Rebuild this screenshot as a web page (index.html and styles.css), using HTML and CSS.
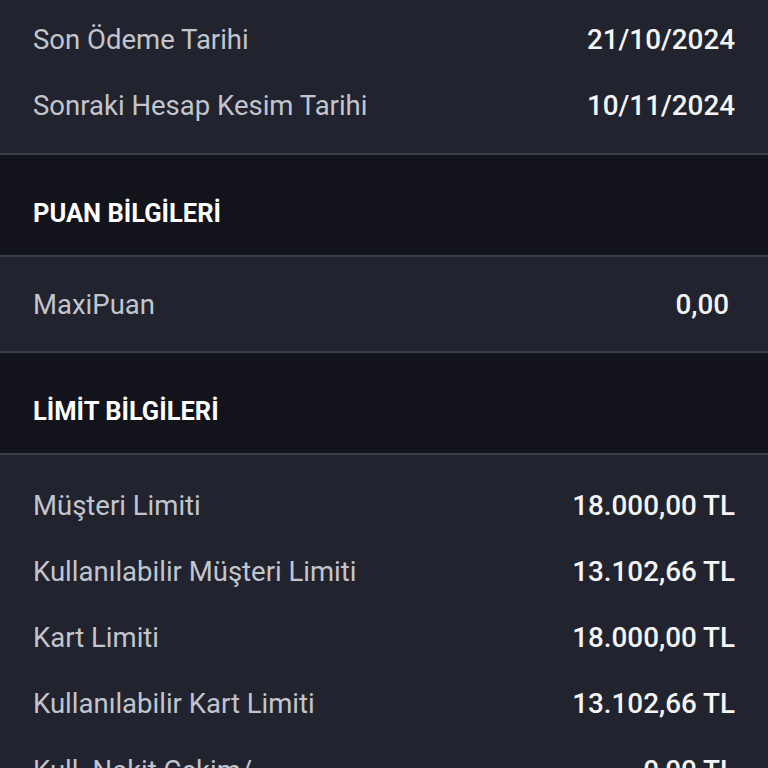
FILE: index.html
```html
<!DOCTYPE html>
<html lang="tr">
<head>
  <meta charset="UTF-8">
  <title>Kart Bilgileri</title>
  <link rel="stylesheet" href="styles.css">
</head>
<body>
  <div class="screen">
    <div class="section first">
      <div class="row">
        <span class="label">Son Ödeme Tarihi</span>
        <span class="value">21/10/2024</span>
      </div>
      <div class="row">
        <span class="label">Sonraki Hesap Kesim Tarihi</span>
        <span class="value">10/11/2024</span>
      </div>
    </div>

    <div class="section-title">PUAN BİLGİLERİ</div>

    <div class="section single">
      <div class="row">
        <span class="label">MaxiPuan</span>
        <span class="value points">0,00</span>
      </div>
    </div>

    <div class="section-title">LİMİT BİLGİLERİ</div>

    <div class="section">
      <div class="row">
        <span class="label">Müşteri Limiti</span>
        <span class="value">18.000,00 TL</span>
      </div>
      <div class="row">
        <span class="label">Kullanılabilir Müşteri Limiti</span>
        <span class="value">13.102,66 TL</span>
      </div>
      <div class="row">
        <span class="label">Kart Limiti</span>
        <span class="value">18.000,00 TL</span>
      </div>
      <div class="row">
        <span class="label">Kullanılabilir Kart Limiti</span>
        <span class="value">13.102,66 TL</span>
      </div>
      <div class="row tall">
        <span class="label">Kull. Nakit Çekim/<br>Avans Limiti</span>
        <span class="value">0,00 TL</span>
      </div>
    </div>
  </div>
</body>
</html>
```

FILE: styles.css
```css
html, body {
  margin: 0;
  height: 768px;
  overflow: hidden;
  background: #21232e;
}

body {
  font-family: Roboto, "Liberation Sans", sans-serif;
}

.screen {
  display: flex;
  flex-direction: column;
}

.section {
  background: #21232e;
  padding: 17px 0 15px;
  border-bottom: 2px solid #3b3d48;
}

.section.first {
  margin-top: -11px;
}

.section.single {
  padding: 14px 0;
}

.row {
  height: 66px;
  display: flex;
  align-items: center;
  justify-content: space-between;
  padding: 0 33px;
}

.row.tall {
  height: auto;
  align-items: flex-start;
  padding-top: 18px;
}

.label {
  font-size: 27.5px;
  color: #c3c5cd;
}

.value {
  font-size: 27.8px;
  font-weight: 500;
  color: #f5f5f7;
}

.value.points {
  margin-right: 6px;
}

.section-title {
  background: #13131b;
  height: 102px;
  box-sizing: border-box;
  padding: 43px 33px 0;
  border-bottom: 2px solid #3b3d48;
  font-size: 25.5px;
  font-weight: 700;
  color: #ffffff;
}
```
